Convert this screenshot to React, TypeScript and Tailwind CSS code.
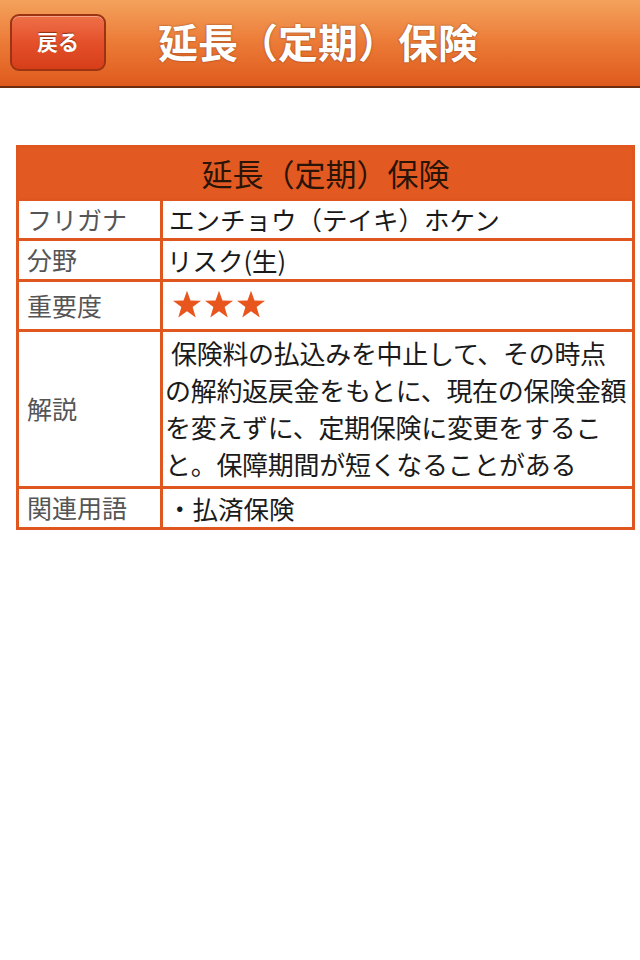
import React from "react";

const Star = () => (
  <svg width="30" height="29" viewBox="0 0 24 23" className="block">
    <polygon
      points="12,0.5 14.8,8.3 23.2,8.4 16.5,13.5 19,21.8 12,16.9 5,21.8 7.5,13.5 0.8,8.4 9.2,8.3"
      fill="#e8561e"
    />
  </svg>
);

const Row = ({
  label,
  h,
  children,
}: {
  label: string;
  h: string;
  children: React.ReactNode;
}) => (
  <div className={`flex border-t-[3px] border-[#e0561f] ${h}`}>
    <div className="w-[144px] shrink-0 border-r-[3px] border-[#e0561f] pl-[8px] flex items-center text-[25px] text-[#555]">
      {label}
    </div>
    <div className="flex-1 min-w-0 flex items-center text-[25.5px] text-[#1a1a1a]">{children}</div>
  </div>
);

export default function App() {
  return (
    <div
      className="w-[640px] h-[960px] bg-white overflow-hidden"
      style={{ fontFamily: '"Noto Sans CJK JP", "Noto Sans", sans-serif' }}
    >
      <div className="h-[88px] border-b-2 border-[#6b2c10] bg-gradient-to-b from-[#f3a25c] via-[#eb7a36] to-[#df5a1c] flex items-center">
        <div className="ml-[10px] mt-[-2px] w-[96px] h-[57px] rounded-[9px] border-2 border-[#9c3414] bg-gradient-to-b from-[#ee7048] via-[#e4502a] to-[#d63e18] shadow-[inset_0_1px_0_rgba(255,255,255,0.35)] flex items-center justify-center">
          <span className="text-white text-[21px] font-bold [text-shadow:0_-1px_1px_rgba(80,20,0,0.6)]">
            戻る
          </span>
        </div>
        <div className="ml-[52px] mt-[-4px] text-white text-[40px] font-bold leading-none [text-shadow:0_0_2px_rgba(90,30,0,0.7)]">
          延長（定期）保険
        </div>
      </div>

      <div className="ml-[16px] mt-[57px] w-[619px] border-[3px] border-[#e0561f]">
        <div className="h-[50px] bg-[#e25a22] flex items-center justify-center text-[31px] text-[#2a1408]">
          延長（定期）保険
        </div>
        <Row label="フリガナ" h="h-[40px]">
          <span className="pl-[6px]">エンチョウ（テイキ）ホケン</span>
        </Row>
        <Row label="分野" h="h-[41px]">
          <span className="pl-[4px]">リスク(生)</span>
        </Row>
        <Row label="重要度" h="h-[50px]">
          <div className="pl-[9px] flex gap-[2px] mt-[-2px]">
            <Star />
            <Star />
            <Star />
          </div>
        </Row>
        <Row label="解説" h="h-[157px]">
          <div className="leading-[37px] text-[26px] whitespace-nowrap pl-[2px] mt-[-2px] tracking-[-0.3px]">
            <div className="pl-[6px]">保険料の払込みを中止して、その時点</div>
            <div>の解約返戻金をもとに、現在の保険金額</div>
            <div>を変えずに、定期保険に変更をするこ</div>
            <div>と。保障期間が短くなることがある</div>
          </div>
        </Row>
        <Row label="関連用語" h="h-[41px]">
          <span className="pl-[4px]">・払済保険</span>
        </Row>
      </div>
    </div>
  );
}
